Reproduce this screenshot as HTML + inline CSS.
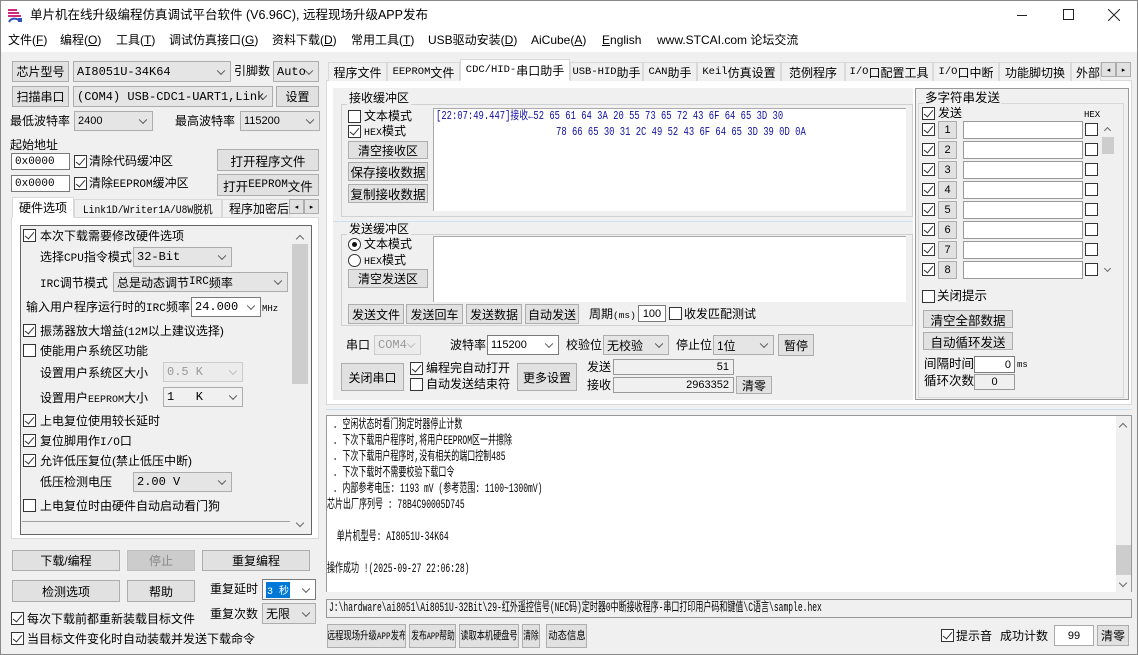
<!DOCTYPE html>
<html><head><meta charset="utf-8">
<style>
*{box-sizing:border-box;margin:0;padding:0}
body{width:1138px;height:655px;overflow:hidden;background:#f0f0f0;font-family:"Liberation Sans","Noto Sans CJK SC",sans-serif;font-size:12px;color:#000;position:relative}
.a{position:absolute}
.t{position:absolute;white-space:nowrap;font-size:12px;line-height:14px}
.m{font-family:"Liberation Mono","Noto Sans CJK SC",monospace;font-size:10px}
.mi{font-family:"Liberation Mono",monospace;font-size:11px}
.n{display:inline-block;transform:scaleX(.8);white-space:nowrap}
.b{position:absolute;border:1px solid #adadad;background:#e1e1e1;text-align:center;white-space:nowrap;font-size:12px;display:flex;align-items:center;justify-content:center;overflow:hidden}
.s{position:absolute;border:1px solid #adadad;background:#e5e5e5;white-space:nowrap;font-size:12px;display:flex;align-items:center;padding-left:3px;overflow:hidden}
.s.w{background:#fff;border-color:#7a7a7a}
.s::after{content:"";position:absolute;right:6px;top:50%;width:5px;height:5px;border-right:1px solid #555;border-bottom:1px solid #555;transform:translateY(-70%) rotate(45deg)}
.s.d{color:#999;background:#ececec;border-color:#ccc}
.s.d::after{border-color:#bbb}
.i{position:absolute;border:1px solid #7a7a7a;background:#fff;font-size:11px;display:flex;align-items:center;white-space:nowrap;padding:0 3px}
.cb{position:absolute;width:13px;height:13px;border:1px solid #333;background:#fff}
.cb.c::after{content:"";position:absolute;left:3px;top:0px;width:4px;height:8px;border-right:1.3px solid #333;border-bottom:1.3px solid #333;transform:rotate(40deg)}
.rd{position:absolute;width:13px;height:13px;border:1px solid #333;border-radius:50%;background:#fff}
.rd.c::after{content:"";position:absolute;left:3px;top:3px;width:5px;height:5px;border-radius:50%;background:#111}
.g{position:absolute;border:1px solid #dcdcdc}
.tab{position:absolute;border:1px solid #d9d9d9;border-bottom:none;background:#f0f0f0;font-size:12px;display:flex;align-items:center;justify-content:center;white-space:nowrap;overflow:hidden}
.tab.sel{background:#fff;border-color:#d9d9d9}
.sb{position:absolute;background:#f0f0f0}
.ar{position:absolute;width:6px;height:6px;border-left:1px solid #666;border-top:1px solid #666}
.lg{position:absolute;white-space:nowrap;font-family:"Liberation Mono","Noto Sans CJK SC",monospace;font-size:12.5px;line-height:14px;transform:scaleX(.64);transform-origin:left center}
.bb{position:absolute;border:1px solid #adadad;background:#e1e1e1;white-space:nowrap;font-size:11px;line-height:22px;overflow:hidden}
.bb>span{position:absolute;left:50%;top:0;transform-origin:center;white-space:nowrap}
</style></head><body>
<div class="a" style="left:0;top:0;width:1138px;height:52px;background:#fff"></div>
<svg class="a" style="left:7px;top:7px" width="16" height="16" viewBox="0 0 16 16"><path d="M1 3h9M1 6h11M1 9h13" stroke="#d0287a" stroke-width="2"/><path d="M2 15c2-4 6-4 10-2" stroke="#3050c0" stroke-width="2" fill="none"/><rect x="11" y="11" width="4" height="4" fill="#3050c0"/></svg>
<div class="t" style="left:30px;top:8px;font-size:12.5px">单片机在线升级编程仿真调试平台软件 (V6.96C), 远程现场升级APP发布</div>
<div class="a" style="left:1017px;top:15px;width:10px;height:1px;background:#222"></div>
<div class="a" style="left:1063px;top:9px;width:11px;height:11px;border:1px solid #222"></div>
<svg class="a" style="left:1108px;top:9px" width="12" height="12"><path d="M0 0L12 12M12 0L0 12" stroke="#222" stroke-width="1"/></svg>
<div class="t" style="left:8px;top:33px">文件(<u>F</u>)</div>
<div class="t" style="left:60px;top:33px">编程(<u>O</u>)</div>
<div class="t" style="left:116px;top:33px">工具(<u>T</u>)</div>
<div class="t" style="left:169px;top:33px">调试仿真接口(<u>G</u>)</div>
<div class="t" style="left:272px;top:33px">资料下载(<u>D</u>)</div>
<div class="t" style="left:351px;top:33px">常用工具(<u>T</u>)</div>
<div class="t" style="left:428px;top:33px">USB驱动安装(<u>D</u>)</div>
<div class="t" style="left:531px;top:33px">AiCube(<u>A</u>)</div>
<div class="t" style="left:602px;top:33px"><u>E</u>nglish</div>
<div class="t" style="left:657px;top:33px">www.STCAI.com 论坛交流</div>

<!-- LEFT -->
<div class="b" style="left:12px;top:61px;width:57px;height:21px">芯片型号</div>
<div class="s m" style="left:73px;top:61px;width:158px;height:21px">AI8051U-34K64</div>
<div class="t" style="left:234px;top:64px">引脚数</div>
<div class="s m" style="left:273px;top:61px;width:46px;height:21px">Auto</div>
<div class="b" style="left:12px;top:86px;width:57px;height:21px">扫描串口</div>
<div class="s m" style="left:73px;top:86px;width:200px;height:21px">(COM4) USB-CDC1-UART1,Link</div>
<div class="b" style="left:276px;top:86px;width:43px;height:21px">设置</div>
<div class="t" style="left:10px;top:114px">最低波特率</div>
<div class="s" style="left:74px;top:111px;width:79px;height:20px;font-size:11px">2400</div>
<div class="t" style="left:175px;top:114px">最高波特率</div>
<div class="s" style="left:240px;top:111px;width:80px;height:20px;font-size:11px">115200</div>
<div class="t" style="left:10px;top:138px">起始地址</div>
<div class="i m" style="left:11px;top:153px;width:59px;height:17px">0x0000</div>
<div class="cb c" style="left:74px;top:155px"></div><div class="t" style="left:89px;top:154px">清除代码缓冲区</div>
<div class="b" style="left:217px;top:149px;width:102px;height:22px;font-size:12.5px">打开程序文件</div>
<div class="i m" style="left:11px;top:175px;width:59px;height:17px">0x0000</div>
<div class="cb c" style="left:74px;top:177px"></div><div class="t" style="left:89px;top:176px">清除<span class="mi">EEPROM</span>缓冲区</div>
<div class="b" style="left:217px;top:174px;width:102px;height:22px;font-size:12.5px">打开<span class="mi">EEPROM</span>文件</div>
<div class="a" style="left:11px;top:217px;width:308px;height:322px;background:#fff;border:1px solid #d9d9d9"></div>
<div class="tab sel" style="left:12px;top:197px;width:62px;height:21px;border-bottom:1px solid #fff">硬件选项</div>
<div class="tab m" style="left:74px;top:199px;width:148px;height:18px;font-size:11px"><span class="n" style="transform:scaleX(.88)">Link1D/Writer1A/U8W脱机</span></div>
<div class="tab" style="left:222px;top:199px;width:68px;height:18px;justify-content:flex-start;padding-left:6px">程序加密后</div>
<div class="b" style="left:289px;top:199px;width:15px;height:15px;font-size:7px">◂</div>
<div class="b" style="left:304px;top:199px;width:15px;height:15px;font-size:7px">▸</div>
<div class="a" style="left:20px;top:225px;width:292px;height:310px;background:#f0f0f0;border:1px solid #646464"></div>
<div class="sb" style="left:292px;top:226px;width:17px;height:308px"></div>
<div class="a" style="left:292px;top:244px;width:16px;height:140px;background:#cdcdcd"></div>
<div class="ar" style="left:297px;top:236px;transform:rotate(45deg)"></div>
<div class="ar" style="left:297px;top:520px;transform:rotate(225deg)"></div>
<div class="a" style="left:22px;top:521px;width:268px;height:1px;background:#a0a0a0"></div>
<div class="cb c" style="left:23px;top:229px"></div><div class="t" style="left:40px;top:229px">本次下载需要修改硬件选项</div>
<div class="t" style="left:40px;top:250px">选择<span class="mi">CPU</span>指令模式</div>
<div class="s m" style="left:133px;top:247px;width:99px;height:20px">32-Bit</div>
<div class="t" style="left:40px;top:276px"><span class="mi">IRC</span>调节模式</div>
<div class="s" style="left:113px;top:272px;width:175px;height:20px">总是动态调节<span class="mi">IRC</span>频率</div>
<div class="t" style="left:26px;top:300px">输入用户程序运行时的<span class="mi">IRC</span>频率</div>
<div class="s w m" style="left:191px;top:297px;width:70px;height:20px">24.000</div>
<div class="t m" style="left:262px;top:302px;font-size:9px">MHz</div>
<div class="cb c" style="left:23px;top:324px"></div><div class="t" style="left:40px;top:324px">振荡器放大增益(<span class="mi">12M</span>以上建议选择)</div>
<div class="cb" style="left:23px;top:344px"></div><div class="t" style="left:40px;top:344px">使能用户系统区功能</div>
<div class="t" style="left:40px;top:366px">设置用户系统区大小</div>
<div class="s d m" style="left:163px;top:362px;width:80px;height:20px">0.5 K</div>
<div class="t" style="left:40px;top:391px">设置用户<span class="m">EEPROM</span>大小</div>
<div class="s m" style="left:163px;top:387px;width:80px;height:20px;background:#f0f0f0">1&nbsp;&nbsp;&nbsp;K</div>
<div class="cb c" style="left:23px;top:414px"></div><div class="t" style="left:40px;top:414px">上电复位使用较长延时</div>
<div class="cb c" style="left:23px;top:434px"></div><div class="t" style="left:40px;top:434px">复位脚用作<span class="mi">I/O</span>口</div>
<div class="cb c" style="left:23px;top:454px"></div><div class="t" style="left:40px;top:454px">允许低压复位(禁止低压中断)</div>
<div class="t" style="left:40px;top:475px">低压检测电压</div>
<div class="s m" style="left:133px;top:472px;width:99px;height:20px">2.00 V</div>
<div class="cb" style="left:23px;top:499px"></div><div class="t" style="left:40px;top:499px">上电复位时由硬件自动启动看门狗</div>
<div class="b" style="left:12px;top:550px;width:108px;height:21px">下载/编程</div>
<div class="b" style="left:127px;top:550px;width:68px;height:21px;color:#888;background:#ccc;border-color:#bfbfbf">停止</div>
<div class="b" style="left:202px;top:550px;width:108px;height:21px">重复编程</div>
<div class="b" style="left:12px;top:580px;width:108px;height:22px">检测选项</div>
<div class="b" style="left:127px;top:580px;width:68px;height:22px">帮助</div>
<div class="t" style="left:210px;top:582px">重复延时</div>
<div class="s w" style="left:262px;top:579px;width:54px;height:21px"><span style="background:#0078d7;color:#fff;padding:0 1px" class="m">3 秒</span></div>
<div class="t" style="left:210px;top:607px">重复次数</div>
<div class="s" style="left:262px;top:603px;width:54px;height:21px">无限</div>
<div class="cb c" style="left:11px;top:612px"></div><div class="t" style="left:27px;top:612px">每次下载前都重新装载目标文件</div>
<div class="cb c" style="left:11px;top:632px"></div><div class="t" style="left:27px;top:632px">当目标文件变化时自动装载并发送下载命令</div>

<!-- RIGHT tabs -->
<div class="a" style="left:326px;top:80px;width:806px;height:325px;background:#fff;border:1px solid #d9d9d9"></div>
<div class="tab" style="left:328px;top:62px;width:59px;height:19px">程序文件</div>
<div class="tab" style="left:387px;top:62px;width:73px;height:19px"><span class="m" style="font-size:10.5px">EEPROM</span>文件</div>
<div class="tab sel" style="left:460px;top:59px;width:110px;height:22px;border-bottom:1px solid #fff"><span class="m" style="font-size:10.5px">CDC/HID-</span>串口助手</div>
<div class="tab" style="left:570px;top:62px;width:73px;height:19px"><span class="m" style="font-size:10.5px">USB-HID</span>助手</div>
<div class="tab" style="left:643px;top:62px;width:54px;height:19px"><span class="m" style="font-size:10.5px">CAN</span>助手</div>
<div class="tab" style="left:697px;top:62px;width:84px;height:19px"><span class="m" style="font-size:10.5px">Keil</span>仿真设置</div>
<div class="tab" style="left:781px;top:62px;width:64px;height:19px">范例程序</div>
<div class="tab" style="left:845px;top:62px;width:88px;height:19px"><span class="m" style="font-size:10.5px">I/O</span>口配置工具</div>
<div class="tab" style="left:933px;top:62px;width:66px;height:19px"><span class="m" style="font-size:10.5px">I/O</span>口中断</div>
<div class="tab" style="left:999px;top:62px;width:72px;height:19px">功能脚切换</div>
<div class="tab" style="left:1071px;top:62px;width:30px;height:19px;justify-content:flex-start;padding-left:4px">外部</div>
<div class="b" style="left:1101px;top:62px;width:15px;height:15px;font-size:7px">◂</div>
<div class="b" style="left:1116px;top:62px;width:15px;height:15px;font-size:7px">▸</div>
<div class="a" style="left:333px;top:88px;width:580px;height:312px;background:#f0f0f0"></div>
<div class="a" style="left:915px;top:88px;width:214px;height:312px;background:#f0f0f0;border:1px solid #999"></div>
<div class="g" style="left:341px;top:104px;width:572px;height:113px;border-color:#d0d0d0"></div>
<div class="t" style="left:347px;top:91px;background:#f0f0f0;padding:0 2px">接收缓冲区</div>
<div class="cb" style="left:348px;top:110px"></div><div class="t" style="left:364px;top:109px">文本模式</div>
<div class="cb c" style="left:348px;top:125px"></div><div class="t" style="left:364px;top:124px"><span class="m" style="font-size:10px">HEX</span>模式</div>
<div class="b" style="left:348px;top:141px;width:80px;height:18px">清空接收区</div>
<div class="b" style="left:348px;top:162px;width:80px;height:19px;font-size:12.5px">保存接收数据</div>
<div class="b" style="left:348px;top:184px;width:80px;height:19px;font-size:12.5px">复制接收数据</div>
<div class="a" style="left:433px;top:108px;width:473px;height:103px;background:#fff;border:1px solid #aaa;border-right:none;border-bottom:none"></div>
<div class="t m" style="left:436px;top:110px;color:#1010a0;font-size:11.5px;transform:scaleX(.77);transform-origin:left center">[22:07:49.447]接收←52 65 61 64 3A 20 55 73 65 72 43 6F 64 65 3D 30</div>
<div class="t m" style="left:556px;top:126px;color:#1010a0;font-size:11.5px;transform:scaleX(.77);transform-origin:left center">78 66 65 30 31 2C 49 52 43 6F 64 65 3D 39 0D 0A</div>
<div class="a" style="left:333px;top:221px;width:580px;height:1px;background:#cfe0ee"></div>
<div class="g" style="left:341px;top:234px;width:572px;height:92px;border-color:#d0d0d0"></div>
<div class="t" style="left:347px;top:222px;background:#f0f0f0;padding:0 2px">发送缓冲区</div>
<div class="rd c" style="left:348px;top:238px"></div><div class="t" style="left:364px;top:237px">文本模式</div>
<div class="rd" style="left:348px;top:254px"></div><div class="t" style="left:364px;top:253px"><span class="m" style="font-size:10px">HEX</span>模式</div>
<div class="b" style="left:348px;top:269px;width:80px;height:19px">清空发送区</div>
<div class="a" style="left:433px;top:236px;width:473px;height:66px;background:#fff;border:1px solid #aaa;border-right:none;border-bottom:none"></div>
<div class="b" style="left:348px;top:304px;width:56px;height:20px">发送文件</div>
<div class="b" style="left:406px;top:304px;width:57px;height:20px">发送回车</div>
<div class="b" style="left:466px;top:304px;width:56px;height:20px">发送数据</div>
<div class="b" style="left:525px;top:304px;width:54px;height:20px">自动发送</div>
<div class="t" style="left:589px;top:307px">周期<span class="m" style="font-size:9.5px">(ms)</span></div>
<div class="i" style="left:638px;top:305px;width:28px;height:17px;justify-content:center">100</div>
<div class="cb" style="left:669px;top:307px"></div><div class="t" style="left:684px;top:307px">收发匹配测试</div>
<div class="t" style="left:346px;top:338px">串口</div>
<div class="s d m" style="left:374px;top:335px;width:47px;height:20px">COM4</div>
<div class="t" style="left:450px;top:338px">波特率</div>
<div class="s w" style="left:487px;top:335px;width:72px;height:20px;font-size:11px">115200</div>
<div class="t" style="left:566px;top:338px">校验位</div>
<div class="s" style="left:603px;top:335px;width:66px;height:20px">无校验</div>
<div class="t" style="left:676px;top:338px">停止位</div>
<div class="s" style="left:713px;top:335px;width:61px;height:20px">1位</div>
<div class="b" style="left:778px;top:334px;width:36px;height:22px">暂停</div>
<div class="b" style="left:341px;top:363px;width:63px;height:28px">关闭串口</div>
<div class="cb c" style="left:410px;top:362px"></div><div class="t" style="left:426px;top:361px">编程完自动打开</div>
<div class="cb" style="left:410px;top:378px"></div><div class="t" style="left:426px;top:377px">自动发送结束符</div>
<div class="b" style="left:517px;top:363px;width:60px;height:28px">更多设置</div>
<div class="t" style="left:587px;top:360px">发送</div>
<div class="a" style="left:613px;top:359px;width:121px;height:16px;border:1px solid #999;background:#f0f0f0;font-size:11px;text-align:right;padding-right:4px;line-height:14px">51</div>
<div class="t" style="left:587px;top:378px">接收</div>
<div class="a" style="left:613px;top:377px;width:121px;height:16px;border:1px solid #999;background:#f0f0f0;font-size:11px;text-align:right;padding-right:4px;line-height:14px">2963352</div>
<div class="b" style="left:736px;top:376px;width:36px;height:18px">清零</div>
<div class="g" style="left:918px;top:103px;width:206px;height:295px;border-color:#d8d8d8"></div>
<div class="t" style="left:924px;top:91px;background:#f0f0f0;padding:0 1px;font-size:12.5px">多字符串发送</div>
<div class="cb c" style="left:922px;top:107px"></div><div class="t" style="left:938px;top:106px">发送</div>
<div class="t m" style="left:1084px;top:108px;font-size:9px">HEX</div>
<div class="sb" style="left:1101px;top:121px;width:14px;height:162px"></div>
<div class="a" style="left:1102px;top:137px;width:12px;height:17px;background:#cdcdcd"></div>
<div class="ar" style="left:1105px;top:128px;width:5px;height:5px;transform:rotate(45deg)"></div>
<div class="ar" style="left:1105px;top:266px;width:5px;height:5px;transform:rotate(225deg)"></div>
<div class="cb" style="left:922px;top:290px"></div><div class="t" style="left:937px;top:289px;font-size:12.5px">关闭提示</div>
<div class="b" style="left:923px;top:310px;width:90px;height:18px;font-size:12.5px">清空全部数据</div>
<div class="b" style="left:923px;top:332px;width:90px;height:18px;font-size:12.5px">自动循环发送</div>
<div class="t" style="left:924px;top:357px;font-size:12.5px">间隔时间</div>
<div class="i" style="left:974px;top:356px;width:41px;height:17px;justify-content:flex-end">0</div>
<div class="t m" style="left:1017px;top:358px;font-size:9px">ms</div>
<div class="t" style="left:924px;top:374px;font-size:12.5px">循环次数</div>
<div class="a" style="left:974px;top:374px;width:41px;height:16px;border:1px solid #999;text-align:center;font-size:11px;line-height:14px">0</div>

<!-- log -->
<div class="a" style="left:326px;top:409px;width:806px;height:1px;background:#cfe0ee"></div>
<div class="a" style="left:326px;top:415px;width:806px;height:177px;background:#fff;border:1px solid #999;border-bottom:none"></div>
<div class="sb" style="left:1116px;top:416px;width:15px;height:176px"></div>
<div class="a" style="left:1116px;top:545px;width:15px;height:30px;background:#cdcdcd"></div>
<div class="ar" style="left:1120px;top:424px;transform:rotate(45deg)"></div>
<div class="ar" style="left:1120px;top:580px;transform:rotate(225deg)"></div>
<div class="lg" style="left:328px;top:418px">&nbsp;. 空闲状态时看门狗定时器停止计数</div>
<div class="lg" style="left:328px;top:434px">&nbsp;. 下次下载用户程序时,将用户EEPROM区一并擦除</div>
<div class="lg" style="left:328px;top:450px">&nbsp;. 下次下载用户程序时,没有相关的端口控制485</div>
<div class="lg" style="left:328px;top:466px">&nbsp;. 下次下载时不需要校验下载口令</div>
<div class="lg" style="left:328px;top:482px">&nbsp;. 内部参考电压: 1193 mV (参考范围: 1100~1300mV)</div>
<div class="lg" style="left:327px;top:498px">芯片出厂序列号 : 78B4C90005D745</div>
<div class="lg" style="left:327px;top:530px">&nbsp;&nbsp;单片机型号: AI8051U-34K64</div>
<div class="lg" style="left:327px;top:562px">操作成功 !(2025-09-27 22:06:28)</div>
<div class="a" style="left:326px;top:599px;width:806px;height:19px;border:1px solid #999;background:#f0f0f0;overflow:hidden"></div>
<div class="lg" style="left:329px;top:601px">J:\hardware\ai8051\Ai8051U-32Bit\29-红外遥控信号(NEC码)定时器0中断接收程序-串口打印用户码和键值\C语言\sample.hex</div>
<div class="bb" style="left:327px;top:624px;width:79px;height:24px"><span style="transform:translateX(-50%) scaleX(.76)">远程现场升级<span class="m">APP</span>发布</span></div>
<div class="bb" style="left:409px;top:624px;width:47px;height:24px"><span style="transform:translateX(-50%) scaleX(.7)">发布<span class="m">APP</span>帮助</span></div>
<div class="bb" style="left:459px;top:624px;width:60px;height:24px"><span style="transform:translateX(-50%) scaleX(.74)">读取本机硬盘号</span></div>
<div class="bb" style="left:522px;top:624px;width:18px;height:24px"><span style="transform:translateX(-50%) scaleX(.7)">清除</span></div>
<div class="bb" style="left:546px;top:624px;width:41px;height:24px"><span style="transform:translateX(-50%) scaleX(.85)">动态信息</span></div>
<div class="cb c" style="left:941px;top:629px"></div><div class="t" style="left:956px;top:629px">提示音</div>
<div class="t" style="left:1000px;top:629px">成功计数</div>
<div class="i" style="left:1054px;top:625px;width:40px;height:21px;justify-content:center;border-color:#aaa">99</div>
<div class="b" style="left:1097px;top:625px;width:32px;height:21px">清零</div>
<div class="a" style="left:0;top:0;width:1px;height:655px;background:#888"></div>
<div class="a" style="left:1137px;top:0;width:1px;height:655px;background:#888"></div>
<div class="a" style="left:0;top:654px;width:1138px;height:1px;background:#888"></div>
<div class="a" style="left:0;top:0;width:1138px;height:1px;background:#888"></div>

<div class="cb c" style="left:922px;top:123px"></div><div class="b" style="left:938px;top:121px;width:19px;height:18px;font-size:11px">1</div><div class="a" style="left:963px;top:121px;width:120px;height:18px;background:#fff;border:1px solid #999"></div><div class="cb" style="left:1085px;top:123px"></div>
<div class="cb c" style="left:922px;top:143px"></div><div class="b" style="left:938px;top:141px;width:19px;height:18px;font-size:11px">2</div><div class="a" style="left:963px;top:141px;width:120px;height:18px;background:#fff;border:1px solid #999"></div><div class="cb" style="left:1085px;top:143px"></div>
<div class="cb c" style="left:922px;top:163px"></div><div class="b" style="left:938px;top:161px;width:19px;height:18px;font-size:11px">3</div><div class="a" style="left:963px;top:161px;width:120px;height:18px;background:#fff;border:1px solid #999"></div><div class="cb" style="left:1085px;top:163px"></div>
<div class="cb c" style="left:922px;top:183px"></div><div class="b" style="left:938px;top:181px;width:19px;height:18px;font-size:11px">4</div><div class="a" style="left:963px;top:181px;width:120px;height:18px;background:#fff;border:1px solid #999"></div><div class="cb" style="left:1085px;top:183px"></div>
<div class="cb c" style="left:922px;top:203px"></div><div class="b" style="left:938px;top:201px;width:19px;height:18px;font-size:11px">5</div><div class="a" style="left:963px;top:201px;width:120px;height:18px;background:#fff;border:1px solid #999"></div><div class="cb" style="left:1085px;top:203px"></div>
<div class="cb c" style="left:922px;top:223px"></div><div class="b" style="left:938px;top:221px;width:19px;height:18px;font-size:11px">6</div><div class="a" style="left:963px;top:221px;width:120px;height:18px;background:#fff;border:1px solid #999"></div><div class="cb" style="left:1085px;top:223px"></div>
<div class="cb c" style="left:922px;top:243px"></div><div class="b" style="left:938px;top:241px;width:19px;height:18px;font-size:11px">7</div><div class="a" style="left:963px;top:241px;width:120px;height:18px;background:#fff;border:1px solid #999"></div><div class="cb" style="left:1085px;top:243px"></div>
<div class="cb c" style="left:922px;top:263px"></div><div class="b" style="left:938px;top:261px;width:19px;height:18px;font-size:11px">8</div><div class="a" style="left:963px;top:261px;width:120px;height:18px;background:#fff;border:1px solid #999"></div><div class="cb" style="left:1085px;top:263px"></div>
</body></html>
